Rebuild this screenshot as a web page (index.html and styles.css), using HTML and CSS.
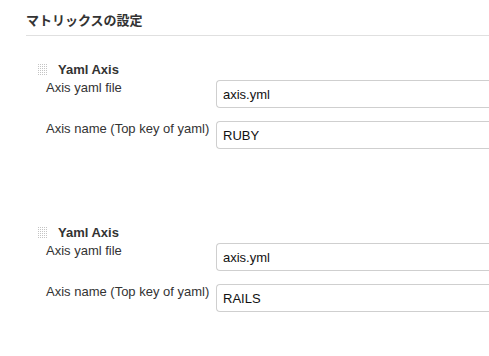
FILE: index.html
```html
<!DOCTYPE html>
<html lang="ja">
<head>
    <meta charset="UTF-8">
    <meta name="viewport" content="width=device-width, initial-scale=1.0">
    <title>マトリックスの設定</title>
    <link rel="stylesheet" href="styles.css">
</head>
<body>
    <div class="section">
        <div class="section-header">マトリックスの設定</div>

        <div class="axis">
            <div class="axis-title"><span class="grip"></span>Yaml Axis</div>
            <div class="row">
                <div class="label">Axis yaml file</div>
                <input class="field" type="text" value="axis.yml">
            </div>
            <div class="row">
                <div class="label">Axis name (Top key of yaml)</div>
                <input class="field" type="text" value="RUBY">
            </div>
        </div>

        <div class="axis">
            <div class="axis-title"><span class="grip"></span>Yaml Axis</div>
            <div class="row">
                <div class="label">Axis yaml file</div>
                <input class="field" type="text" value="axis.yml">
            </div>
            <div class="row">
                <div class="label">Axis name (Top key of yaml)</div>
                <input class="field" type="text" value="RAILS">
            </div>
        </div>
    </div>
</body>
</html>
```

FILE: styles.css
```css
html, body {
    margin: 0;
    padding: 0;
    background: #fff;
}
body {
    font-family: "Liberation Sans", "Noto Sans CJK JP", sans-serif;
    font-size: 13px;
    color: #333;
}

.section {
    padding-left: 26px;
}
.section-header {
    font-family: "Liberation Sans", "Noto Sans CJK JP", sans-serif;
    font-weight: bold;
    font-size: 13px;
    line-height: 18px;
    padding: 12px 0 5px;
    border-bottom: 1px solid #e0e0e0;
    color: #333;
}

.axis {
    padding-left: 12px;
    margin-top: 25px;
}
.axis + .axis {
    margin-top: 75px;
}
.axis-title {
    display: flex;
    align-items: center;
    font-weight: bold;
    line-height: 17px;
    margin-bottom: 2px;
}
.grip {
    display: inline-block;
    width: 10px;
    height: 12px;
    margin-right: 10px;
    background: conic-gradient(from 270deg at 1px 1px, #c4c4c4 90deg, transparent 0) 0 0 / 2px 2px;
}

.row {
    display: flex;
    align-items: flex-start;
}
.row + .row {
    margin-top: 13px;
}
.label {
    width: 178px;
    flex: none;
    padding-left: 8px;
    box-sizing: border-box;
    line-height: 15px;
    white-space: nowrap;
}
.field {
    flex: 1;
    min-width: 0;
    height: 28px;
    box-sizing: border-box;
    margin: 0;
    padding: 0 6px;
    border: 1px solid #cfcfcf;
    border-right: none;
    border-radius: 4px 0 0 4px;
    font-family: "Liberation Sans", sans-serif;
    font-size: 13px;
    color: #111;
    background: #fff;
}
```
